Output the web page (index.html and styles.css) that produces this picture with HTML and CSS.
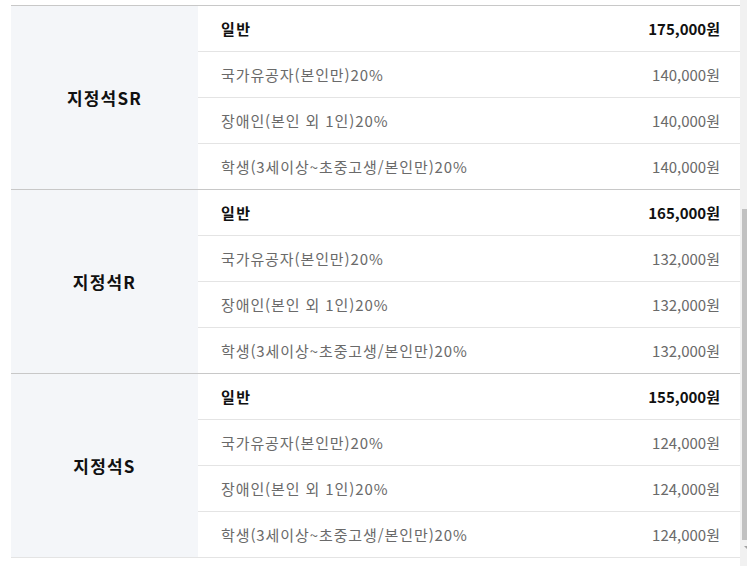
FILE: index.html
```html
<!DOCTYPE html>
<html lang="ko">
<head>
<meta charset="utf-8">
<link rel="stylesheet" href="styles.css">
</head>
<body>
<div class="page">
  <div class="table">
    <div class="group">
      <div class="seat">지정석SR</div>
      <div class="rows">
        <div class="row main"><span class="name">일반</span><span>175,000원</span></div>
        <div class="row"><span class="name">국가유공자(본인만)20%</span><span>140,000원</span></div>
        <div class="row"><span class="name">장애인(본인 외 1인)20%</span><span>140,000원</span></div>
        <div class="row"><span class="name">학생(3세이상~초중고생/본인만)20%</span><span>140,000원</span></div>
      </div>
    </div>
    <div class="group">
      <div class="seat">지정석R</div>
      <div class="rows">
        <div class="row main"><span class="name">일반</span><span>165,000원</span></div>
        <div class="row"><span class="name">국가유공자(본인만)20%</span><span>132,000원</span></div>
        <div class="row"><span class="name">장애인(본인 외 1인)20%</span><span>132,000원</span></div>
        <div class="row"><span class="name">학생(3세이상~초중고생/본인만)20%</span><span>132,000원</span></div>
      </div>
    </div>
    <div class="group last">
      <div class="seat">지정석S</div>
      <div class="rows">
        <div class="row main"><span class="name">일반</span><span>155,000원</span></div>
        <div class="row"><span class="name">국가유공자(본인만)20%</span><span>124,000원</span></div>
        <div class="row"><span class="name">장애인(본인 외 1인)20%</span><span>124,000원</span></div>
        <div class="row"><span class="name">학생(3세이상~초중고생/본인만)20%</span><span>124,000원</span></div>
      </div>
    </div>
  </div>
  <div class="scrollbar"><div class="thumb"></div><div class="arrow"></div></div>
</div>
</body>
</html>
```
FILE: styles.css
```css
html, body {
  margin: 0;
  padding: 0;
  background: #fff;
  overflow: hidden;
}
body {
  font-family: "Noto Sans CJK KR", "Noto Sans", sans-serif;
  color: #6a6a6a;
}
.page {
  position: relative;
  width: 747px;
  height: 566px;
  padding: 5px 7px 0 11px;
  box-sizing: border-box;
}
.table {
  width: 729px;
}
.group {
  display: flex;
  border-top: 1px solid #c8c8c8;
}
.group.last {
  border-bottom: 1px solid #e4e4e4;
}
.seat {
  width: 187px;
  flex: none;
  background: #f4f6f9;
  display: flex;
  align-items: center;
  justify-content: center;
  font-size: 17px;
  font-weight: 700;
  color: #111;
  letter-spacing: 1.2px;
  box-sizing: border-box;
}
.rows {
  flex: 1;
}
.row {
  height: 45px;
  display: flex;
  align-items: center;
  justify-content: space-between;
  padding: 0 20px 0 23px;
  font-size: 15px;
  border-bottom: 1px solid #e4e4e4;
}
.row:last-child {
  border-bottom: none;
}
.name {
  letter-spacing: 0.9px;
}
.row.main {
  font-weight: 700;
  color: #111;
}
.row.main .name {
  letter-spacing: 1.5px;
}
.scrollbar {
  position: absolute;
  top: 0;
  left: 740px;
  width: 17px;
  height: 566px;
  background: #f1f1f1;
}
.thumb {
  position: absolute;
  top: 209px;
  left: 2px;
  width: 13px;
  height: 331px;
  background: #c1c1c1;
}
.arrow {
  position: absolute;
  top: 546px;
  left: 4px;
  width: 0;
  height: 0;
  border-left: 4px solid transparent;
  border-right: 4px solid transparent;
  border-top: 4px solid #a3a3a3;
}
```
